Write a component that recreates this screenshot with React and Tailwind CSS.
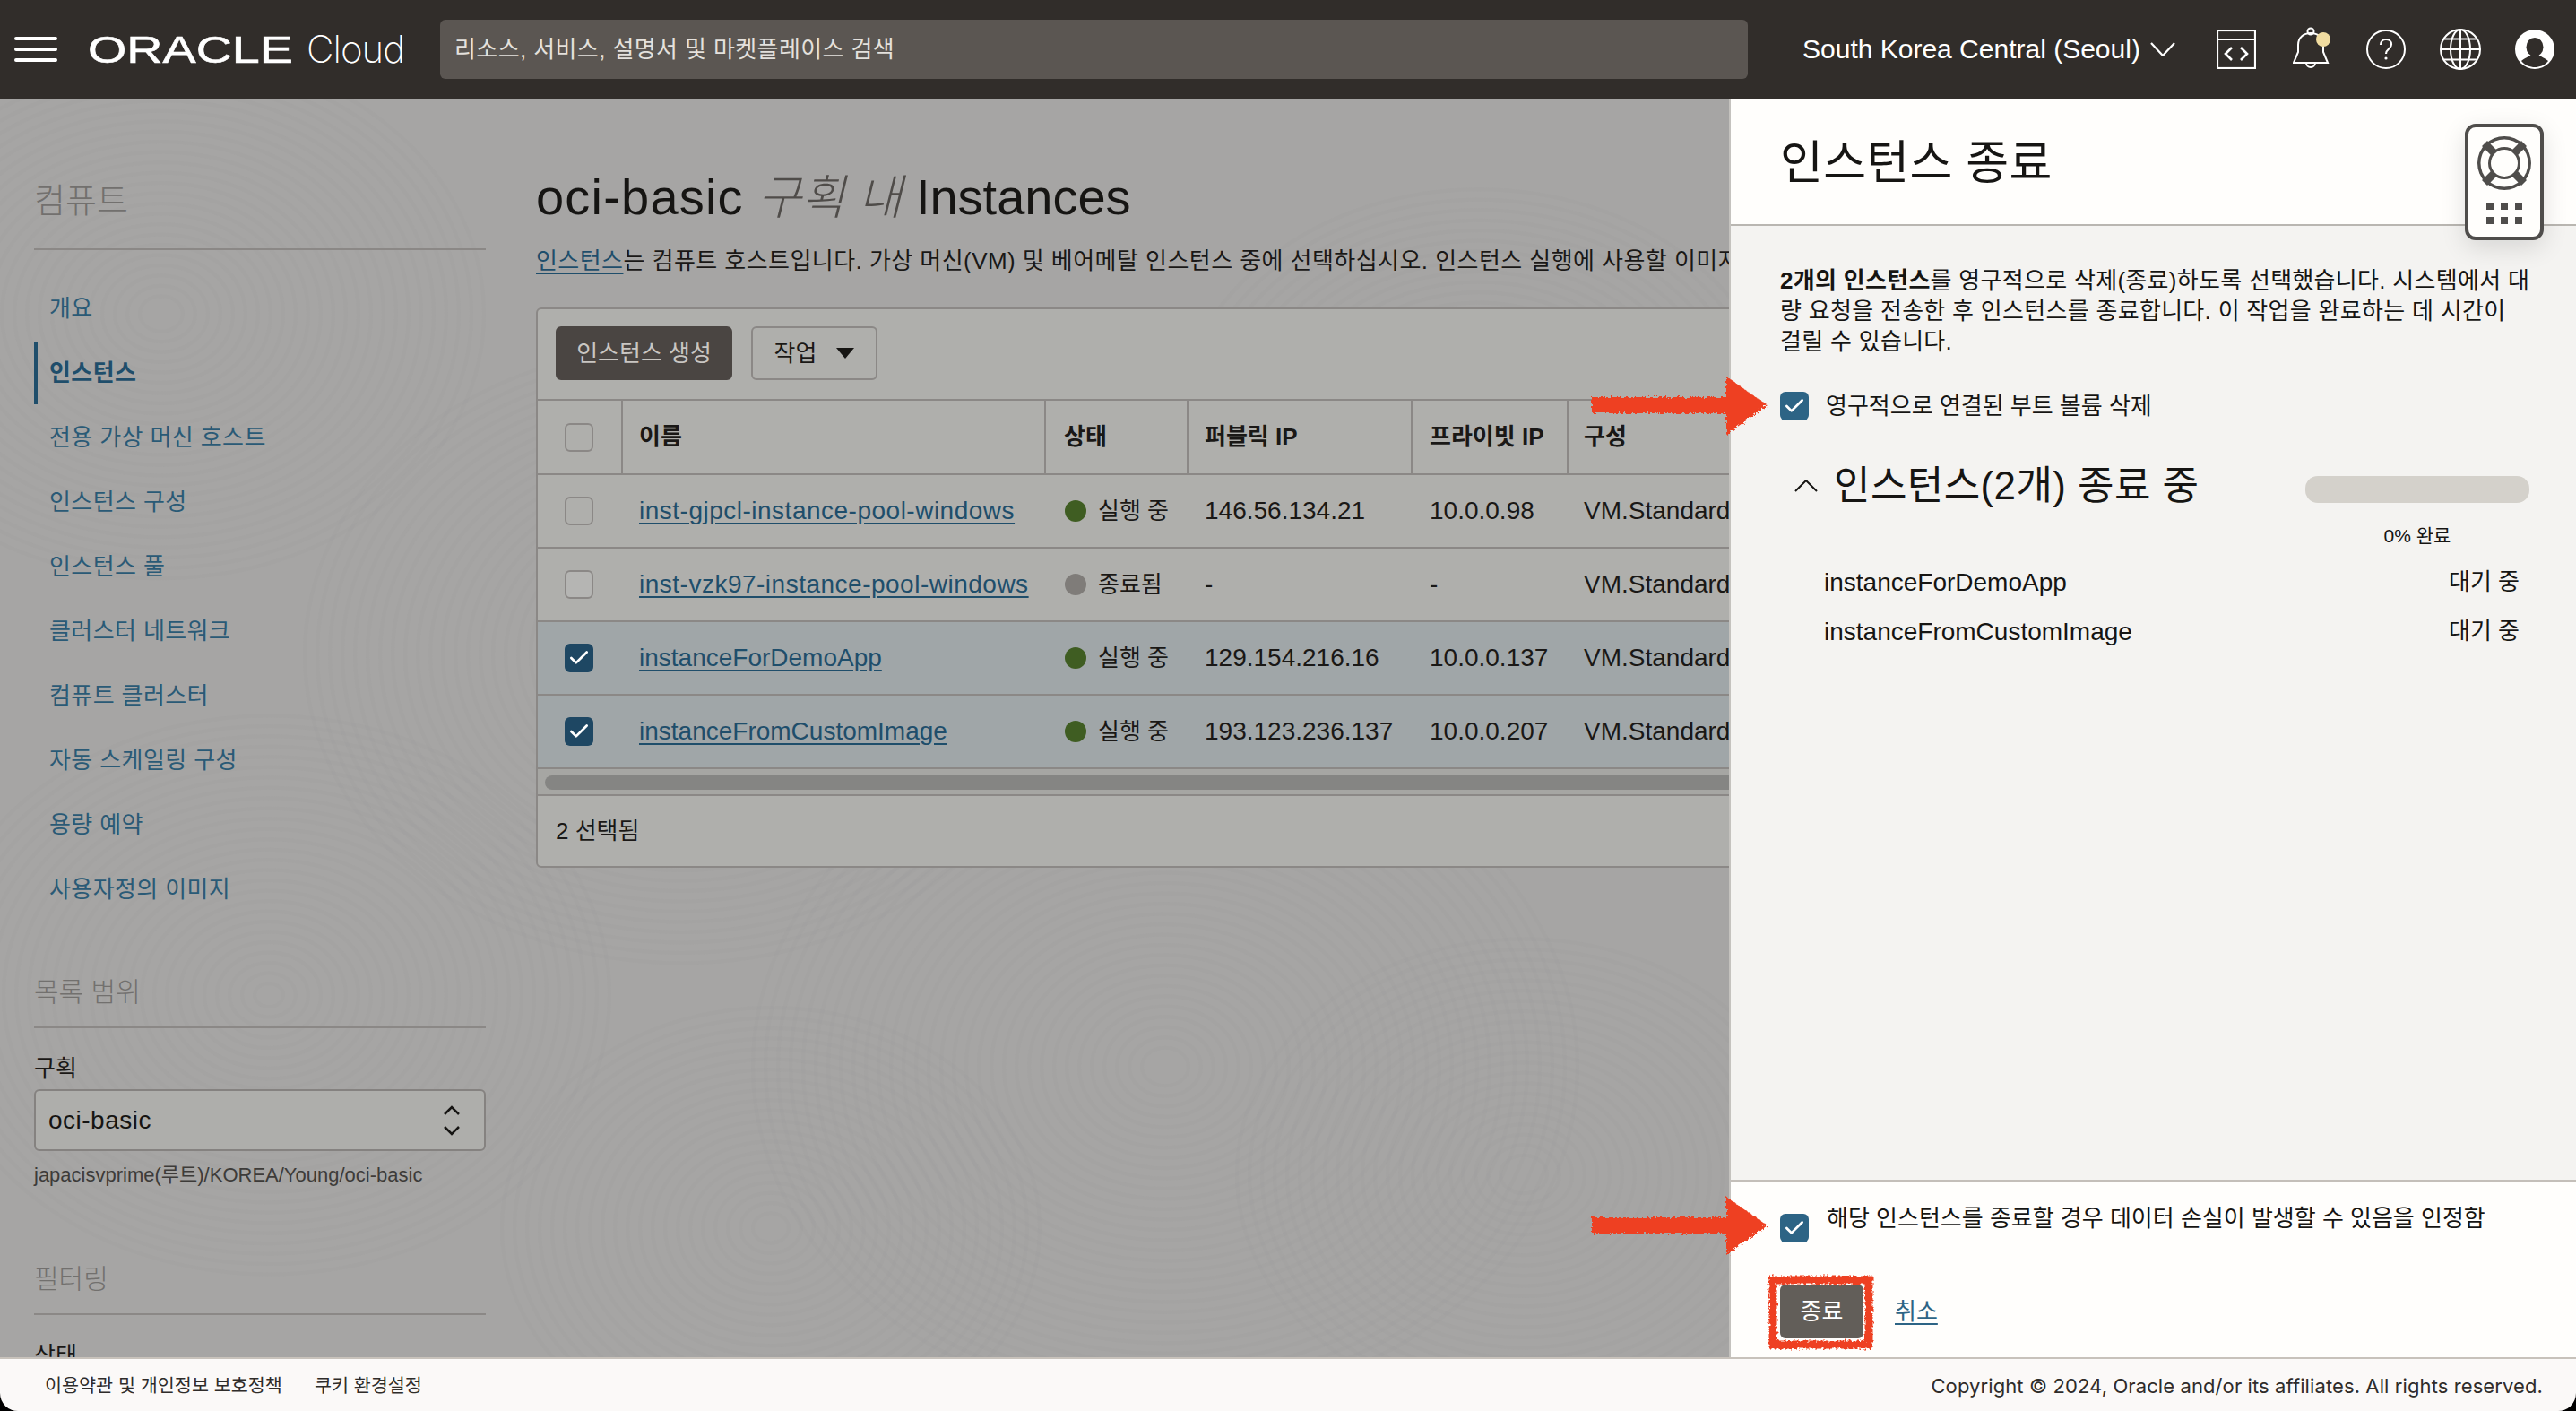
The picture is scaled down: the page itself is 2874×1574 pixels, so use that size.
// App.jsx — OCI instances page with the terminate-instance drawer open
import { Check } from 'lucide-react'

const SANS = "font-['Liberation_Sans','Noto_Sans_CJK_KR',sans-serif]"
const ROW = 'grid grid-cols-[95px_472px_159px_250px_174px_1fr] items-center'

const NAV = ['개요', '인스턴스', '전용 가상 머신 호스트', '인스턴스 구성', '인스턴스 풀', '클러스터 네트워크', '컴퓨트 클러스터', '자동 스케일링 구성', '용량 예약', '사용자정의 이미지']

const INSTANCES = [
  { name: 'inst-gjpcl-instance-pool-windows', state: '실행 중', pub: '146.56.134.21', priv: '10.0.0.98', wide: true },
  { name: 'inst-vzk97-instance-pool-windows', state: '종료됨', pub: '-', priv: '-', off: true, wide: true },
  { name: 'instanceForDemoApp', state: '실행 중', pub: '129.154.216.16', priv: '10.0.0.137', checked: true },
  { name: 'instanceFromCustomImage', state: '실행 중', pub: '193.123.236.137', priv: '10.0.0.207', checked: true },
]

const SWIRLS = [
  [180, 240, 360], [760, 620, 420], [1300, 1080, 460], [300, 1000, 380],
  [1650, 380, 340], [860, 1260, 300], [1700, 1200, 320],
]

function Swirls() {
  return (
    <svg className="absolute inset-0 w-full h-full pointer-events-none" fill="none" stroke="#9a9a9d" strokeWidth="4" strokeOpacity="0.16">
      {SWIRLS.map(([cx, cy, r]) =>
        Array.from({ length: Math.floor(r / 14) }, (_, i) => (
          <ellipse key={`${cx}-${i}`} cx={cx} cy={cy} rx={r - i * 14} ry={(r - i * 14) * 0.82} />
        ))
      )}
    </svg>
  )
}

function HeaderIcons() {
  return (
    <div className="flex items-center ml-[46px] text-white">
      <svg width="44" height="44" viewBox="0 0 44 44" fill="none" stroke="currentColor" strokeWidth="2.2">
        <rect x="1" y="1" width="42" height="42" />
        <path d="M1 11h42" />
        <path d="M17 20l-7 7 7 7M27 20l7 7-7 7" strokeWidth="2.6" />
      </svg>
      <svg className="ml-[41px]" width="44" height="50" viewBox="0 0 44 50" fill="none" stroke="currentColor" strokeWidth="2">
        <circle cx="20" cy="5" r="3.5" />
        <path d="M1 40l5-12V20C6 12 12 7 20 7s14 5 14 13v8l5 12z" />
        <path d="M15 40a5 5 0 0 0 10 0" />
        <circle cx="34" cy="14" r="8" fill="#f1dca0" stroke="none" />
      </svg>
      <svg className="ml-[38px]" width="44" height="44" viewBox="0 0 44 44" fill="none" stroke="currentColor" strokeWidth="2">
        <circle cx="22" cy="22" r="21" />
        <path d="M16 17c0-4 3-6 6-6s6 2 6 5.500c0 5-6 5-6 10.500" strokeWidth="2.200" />
        <circle cx="22" cy="32" r="1.600" fill="currentColor" stroke="none" />
      </svg>
      <svg className="ml-[38px]" width="46" height="46" viewBox="0 0 46 46" fill="none" stroke="currentColor" strokeWidth="2">
        <circle cx="23" cy="23" r="22" />
        <ellipse cx="23" cy="23" rx="11" ry="22" />
        <path d="M23 1v44M1 23h44M5 11.500h36M5 34.500h36" />
      </svg>
      <svg className="ml-[38px]" width="44" height="44" viewBox="0 0 44 44">
        <circle cx="22" cy="22" r="22" fill="white" />
        <ellipse cx="22" cy="19.500" rx="9.500" ry="10.500" fill="#312d2a" />
        <path d="M7 35c3-3 9-5 11-7q4 4 8 0c2 2 8 4 11 7-4 5-10 7-15 7s-11-2-15-7z" fill="#312d2a" />
      </svg>
    </div>
  )
}

function Header() {
  return (
    <header className="h-[110px] shrink-0 bg-[#312d2a] flex items-center pl-[16px] pr-[20px] text-white">
      <div className="flex flex-col gap-[8px] w-[48px]">
        <span className="h-[4px] bg-white rounded-full" />
        <span className="h-[4px] bg-white rounded-full" />
        <span className="h-[4px] bg-white rounded-full" />
      </div>
      <svg className="ml-[34px]" width="230" height="50" viewBox="0 0 230 50">
        <text x="0" y="40" fill="white" stroke="white" strokeWidth="0.6" fontFamily="Liberation Sans" fontWeight="400" fontSize="43" textLength="229" lengthAdjust="spacingAndGlyphs">ORACLE</text>
      </svg>
      <span className="ml-[14px] w-[109px] font-['Inter',sans-serif] font-extralight text-[42px] leading-[50px] tracking-[-1px] whitespace-nowrap">Cloud</span>
      <div className={`ml-[40px] w-[1459px] h-[66px] bg-[#5b5652] rounded-[6px] flex items-center pl-[16px] text-[26px] tracking-[0.4px] text-[#e4e1dd] ${SANS}`}>
        리소스, 서비스, 설명서 및 마켓플레이스 검색
      </div>
      <span className={`ml-[61px] -mt-[2px] text-[30px] whitespace-nowrap ${SANS}`}>South Korea Central (Seoul)</span>
      <svg className="ml-[11px]" width="28" height="16" viewBox="0 0 28 16" fill="none" stroke="white" strokeWidth="2.200">
        <path d="M1 1l13 14L27 1" />
      </svg>
      <HeaderIcons />
    </header>
  )
}

function SectionTitle({ children, className }) {
  return (
    <h2 className={`border-b-2 border-[#8b8886] font-light text-[#72706e] ${className}`}>{children}</h2>
  )
}

function Sidebar() {
  return (
    <aside className="relative w-[598px] shrink-0 pl-[38px] pr-[56px] pt-[90px]">
      <SectionTitle className="text-[38px] leading-[48px] pb-[29px]">컴퓨트</SectionTitle>
      <nav className="mt-[29px]">
        {NAV.map((item, i) => (
          <div key={item} className="h-[72px] flex items-center">
            <a className={i === 1
              ? 'h-[70px] flex items-center border-l-4 border-[#1f4e6b] pl-[13px] text-[26px] tracking-[0.4px] font-bold text-[#1f4e6b]'
              : 'pl-[17px] text-[26px] tracking-[0.4px] text-[#2a5a76]'}>{item}</a>
          </div>
        ))}
      </nav>
      <SectionTitle className="mt-[59px] text-[30px] leading-[40px] pb-[18px]">목록 범위</SectionTitle>
      <div className="mt-[29px] text-[26px] leading-[32px] text-[#1a1816]">구획</div>
      <div className="mt-[7px] h-[69px] bg-[#aeaeab] border-2 border-[#858280] rounded-[6px] flex items-center justify-between pl-[14px] pr-[26px]">
        <span className="text-[28px] tracking-[0.5px] text-[#161513]">oci-basic</span>
        <svg width="20" height="34" viewBox="0 0 20 34" fill="none" stroke="#161513" strokeWidth="2.500">
          <path d="M2 10l8-8 8 8M2 24l8 8 8-8" />
        </svg>
      </div>
      <div className="mt-[13px] text-[22px] leading-[28px] text-[#3d3b39]">japacisvprime(루트)/KOREA/Young/oci-basic</div>
      <SectionTitle className="mt-[82px] text-[30px] leading-[40px] pb-[18px]">필터링</SectionTitle>
      <div className="mt-[29px] text-[26px] leading-[32px] text-[#1a1816]">상태</div>
    </aside>
  )
}

function Checkbox({ checked, disabled, dark }) {
  if (checked) {
    return (
      <span className={`w-[32px] h-[32px] rounded-[6px] flex items-center justify-center ${dark ? 'bg-[#1e4763]' : 'bg-[#2d6485]'}`}>
        <Check size={26} color="white" strokeWidth={2.5} />
      </span>
    )
  }
  return <span className={`w-[32px] h-[32px] rounded-[6px] border-2 border-[#8b8886] ${disabled ? 'bg-[#b5b5b3]' : ''}`} />
}

function InstanceRow({ item }) {
  return (
    <div className={`${ROW} h-[82px] border-b-2 border-[#8b8886] text-[28px] text-[#1a1816] ${item.checked ? 'bg-[#a0a6a8]' : ''}`}>
      <div className="flex pl-[30px]"><Checkbox checked={item.checked} disabled={item.off} dark /></div>
      <a className={`pl-[18px] text-[#1f4e6b] underline underline-offset-4 whitespace-nowrap ${item.wide ? 'tracking-[0.5px]' : ''}`}>{item.name}</a>
      <div className="pl-[21px] flex items-center gap-[13px] text-[26px]">
        <span className={`w-[24px] h-[24px] rounded-full ${item.off ? 'bg-[#7f7c79]' : 'bg-[#3f5d22]'}`} />
        {item.state}
      </div>
      <div className="pl-[18px]">{item.pub}</div>
      <div className="pl-[19px]">{item.priv}</div>
      <div className="pl-[17px] whitespace-nowrap">VM.Standard.E4.Flex</div>
    </div>
  )
}

function InstanceTable() {
  return (
    <div className="mt-[34px] w-[1500px] bg-[#afafac] border-2 border-[#8b8886] rounded-[6px]">
      <div className="h-[102px] flex items-start gap-[21px] pl-[20px] pt-[19px] border-b-2 border-[#8b8886]">
        <button className="h-[60px] w-[197px] rounded-[6px] bg-[#4a4542] text-[26px] text-[#c9c6c2]">인스턴스 생성</button>
        <button className="h-[60px] w-[141px] rounded-[6px] border-2 border-[#8b8886] flex items-center justify-center gap-[22px] text-[26px] text-[#1a1816]">
          작업
          <svg width="20" height="12" viewBox="0 0 20 12"><path d="M0 0h20L10 12z" fill="#161513" /></svg>
        </button>
      </div>
      <div className={`${ROW} h-[83px] border-b-2 border-[#8b8886] text-[26px] font-bold text-[#1a1816]`}>
        <div className="h-full flex items-center pl-[30px] border-r-2 border-[#8b8886]"><Checkbox /></div>
        <div className="h-full flex items-center pl-[18px] border-r-2 border-[#8b8886]">이름</div>
        <div className="h-full flex items-center pl-[20px] border-r-2 border-[#8b8886]">상태</div>
        <div className="h-full flex items-center pl-[18px] border-r-2 border-[#8b8886]">퍼블릭 IP</div>
        <div className="h-full flex items-center pl-[19px] border-r-2 border-[#8b8886]">프라이빗 IP</div>
        <div className="pl-[17px]">구성</div>
      </div>
      {INSTANCES.map(item => <InstanceRow key={item.name} item={item} />)}
      <div className="h-[30px] pl-[8px] pt-[7px] bg-[#a6a6a3] border-b-2 border-[#8b8886]">
        <div className="h-[16px] rounded-full bg-[#858583]" />
      </div>
      <div className="h-[78px] flex items-center pl-[20px] text-[26px] text-[#1a1816]">2 선택됨</div>
    </div>
  )
}

function Main() {
  return (
    <main className="relative pt-[78px] whitespace-nowrap">
      <h1 className="text-[56px] leading-[64px] text-[#161513]">
        <span className="tracking-[1.2px]">oci-basic</span> <em className="font-light text-[53px] text-[#4f4c49]">구획 내</em> Instances
      </h1>
      <p className="mt-[20px] text-[26px] leading-[36px] tracking-[0.45px] text-[#1a1816]">
        <a className="text-[#1f4e6b] underline underline-offset-4">인스턴스</a>는 컴퓨트 호스트입니다. 가상 머신(VM) 및 베어메탈 인스턴스 중에 선택하십시오. 인스턴스 실행에 사용할 이미지를 선택합니다.
      </p>
      <InstanceTable />
    </main>
  )
}

function HelpWidget() {
  return (
    <div className="absolute right-[36px] top-[28px] w-[88px] h-[130px] bg-[#fffefc] border-4 border-[#4f4d4b] rounded-[12px] flex flex-col items-center pt-[10px] shadow-[0_8px_28px_rgba(0,0,0,0.12)]">
      <svg width="60" height="60" viewBox="0 0 60 60">
        <circle cx="30" cy="30" r="30" fill="#4f4d4b" />
        <circle cx="30" cy="30" r="26.500" fill="#fffefc" />
        <path d="M11 5l13 13-6 6L5 11zM49 5L36 18l6 6 13-13zM11 55l13-13-6-6L5 49zM49 55L36 42l6-6 13 13z" fill="#4f4d4b" />
        <circle cx="30" cy="30" r="18" fill="#4f4d4b" />
        <circle cx="30" cy="30" r="15" fill="#fffefc" />
      </svg>
      <div className="mt-[14px] grid grid-cols-[8px_8px_8px] gap-x-[8px] gap-y-[8px]">
        {[0, 1, 2, 3, 4, 5].map(i => <span key={i} className="w-[8px] h-[8px] bg-[#4f4d4b]" />)}
      </div>
    </div>
  )
}

function Drawer() {
  return (
    <section className="absolute top-0 right-0 bottom-0 w-[945px] bg-[#f4f3f1] flex flex-col text-[#161513] border-l-2 border-[#c4c2be]">
      <div className="h-[142px] shrink-0 bg-[#fffefc] border-b-2 border-[#b9b6b1] flex items-center pl-[55px] pt-[4px]">
        <h2 className="text-[52px] leading-[60px] tracking-[0.3px]">인스턴스 종료</h2>
      </div>
      <HelpWidget />
      <div className="flex-1 pl-[55px] pr-[52px] pt-[44px]">
        <p className="text-[26px] leading-[34px] tracking-[0.3px] whitespace-nowrap">
          <b>2개의 인스턴스</b>를 영구적으로 삭제(종료)하도록 선택했습니다. 시스템에서 대<br />
          량 요청을 전송한 후 인스턴스를 종료합니다. 이 작업을 완료하는 데 시간이<br />
          걸릴 수 있습니다.
        </p>
        <label className="mt-[39px] flex items-center gap-[19px] text-[26px] leading-[32px]">
          <Checkbox checked />
          영구적으로 연결된 부트 볼륨 삭제
        </label>
        <div className="mt-[43px] flex items-start justify-between">
          <div className="flex items-center pl-[16px] gap-[18px] h-[60px]">
            <svg width="26" height="14" viewBox="0 0 26 14" fill="none" stroke="#161513" strokeWidth="2"><path d="M1 13L13 1l12 12" /></svg>
            <h3 className="text-[44px] leading-[56px] tracking-[0.4px]">인스턴스(2개) 종료 중</h3>
          </div>
          <div className="w-[250px] pt-[19px]">
            <div className="h-[30px] rounded-[14px] bg-[#d4d1cb]" />
            <div className="mt-[23px] text-center text-[21px] leading-[28px]">0% 완료</div>
          </div>
        </div>
        <div className="mt-[10px] pl-[49px] pr-[11px] text-[28px]">
          <div className="h-[55px] flex items-center justify-between">instanceForDemoApp<span className="text-[26px]">대기 중</span></div>
          <div className="h-[55px] flex items-center justify-between">instanceFromCustomImage<span className="text-[26px]">대기 중</span></div>
        </div>
      </div>
      <div className="h-[198px] shrink-0 bg-[#fffefc] border-t-2 border-[#c4bfb9] pl-[55px] pt-[36px]">
        <label className="flex items-start gap-[20px] text-[26px] leading-[34px]">
          <Checkbox checked />
          <span className="-mt-[12px]">해당 인스턴스를 종료할 경우 데이터 손실이 발생할 수 있음을 인정함</span>
        </label>
        <div className="mt-[47px] flex items-center gap-[35px]">
          <button className="w-[93px] h-[60px] rounded-[6px] bg-[#625e59] text-[26px] text-white">종료</button>
          <a className="text-[26px] text-[#2d6485] underline underline-offset-4">취소</a>
        </div>
      </div>
    </section>
  )
}

function Annotations() {
  const arrow = y => `M1776 ${y - 9}L1926 ${y - 9}L1926 ${y - 32}L1972 ${y}L1926 ${y + 33}L1926 ${y + 9}L1776 ${y + 9}Z`
  return (
    <svg className="absolute inset-0 pointer-events-none" width="2874" height="1574">
      <filter id="rough" x="-5%" y="-20%" width="110%" height="140%">
        <feTurbulence type="fractalNoise" baseFrequency="0.35" numOctaves="2" seed="4" />
        <feDisplacementMap in="SourceGraphic" scale="7" />
      </filter>
      <g filter="url(#rough)">
        <path d={arrow(452)} fill="#ee4123" />
        <path d={arrow(1367)} fill="#ee4123" />
        <rect x="1978" y="1428" width="107" height="72" fill="none" stroke="#ee4123" strokeWidth="9" />
      </g>
    </svg>
  )
}

function Footer() {
  return (
    <footer className="h-[60px] shrink-0 relative bg-[#fbf9f8] border-t-2 border-[#c8c2bb] flex items-center justify-between pl-[50px] pr-[37px] pt-[2px] text-[22px] text-[#2f2c2a] font-['Inter','Noto_Sans_CJK_KR',sans-serif]">
      <div className="flex gap-[36px] text-[20.700px]">
        <span>이용약관 및 개인정보 보호정책</span>
        <span>쿠키 환경설정</span>
      </div>
      <span className="tracking-[0.1px]">Copyright © 2024, Oracle and/or its affiliates. All rights reserved.</span>
    </footer>
  )
}

export default function App() {
  return (
    <div className="w-[2874px] h-[1574px] bg-black">
      <div className={`relative w-full h-full flex flex-col overflow-hidden rounded-b-[20px] ${SANS}`}>
        <Header />
        <div className="relative flex-1 flex overflow-hidden bg-[#a6a5a4]">
          <Swirls />
          <Sidebar />
          <Main />
          <Drawer />
        </div>
        <Footer />
        <Annotations />
      </div>
    </div>
  )
}
